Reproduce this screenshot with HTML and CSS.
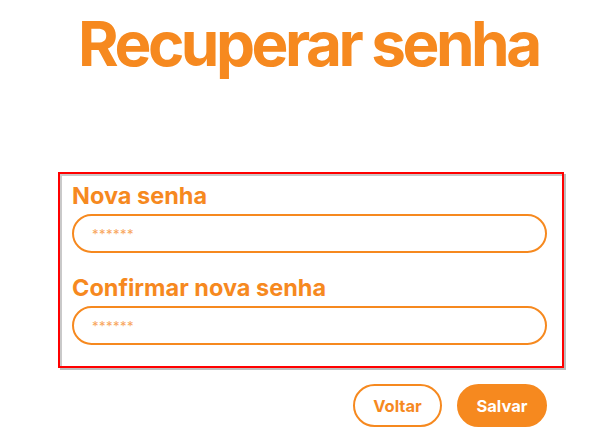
FILE: index.html
```html
<!DOCTYPE html>
<html lang="pt-BR">
<head>
<meta charset="utf-8">
<title>Recuperar senha</title>
<link rel="stylesheet" href="styles.css">
</head>
<body>
<main class="page">
  <h1 class="title">Recuperar senha</h1>
  <form class="form">
    <div class="panel">
      <label class="label" for="nova">Nova senha</label>
      <input class="field" id="nova" type="password" placeholder="******">
      <label class="label label-second" for="confirma">Confirmar nova senha</label>
      <input class="field" id="confirma" type="password" placeholder="******">
    </div>
    <div class="actions">
      <button type="button" class="btn btn-outline">Voltar</button>
      <button type="submit" class="btn btn-solid">Salvar</button>
    </div>
  </form>
</main>
</body>
</html>
```
FILE: styles.css
```css
* { box-sizing: border-box; }
html, body { margin: 0; padding: 0; background: #ffffff; }
body { font-family: Inter, "Liberation Sans", Arial, sans-serif; color: #f6891f; }
.page { width: 596px; height: 444px; position: relative; }
.title {
  margin: 13px 0 0 0;
  padding-left: 78px;
  font-size: 62px;
  line-height: 62px;
  font-weight: 700;
  letter-spacing: -3.5px;
  color: #f6891f;
  white-space: nowrap;
}
.form { margin: 97px 0 0 58px; width: 508px; }
.panel {
  width: 506px;
  border: 2px solid #ff0000;
  box-shadow: 2px 2px 0 0 #bdbdbd, inset 2px 2px 0 0 #c9c9c9;
  padding: 8px 15px 21px 12px;
  display: flex;
  flex-direction: column;
}
.label {
  font-size: 23.5px;
  line-height: 28px;
  font-weight: 700;
  color: #f6891f;
  display: block;
}
.label-second { margin-top: 21px; }
.field {
  margin-top: 4px;
  height: 39px;
  width: 100%;
  border: 2px solid #f6891f;
  border-radius: 20px;
  padding: 0 18px;
  font-family: Inter, "Liberation Sans", Arial, sans-serif;
  font-size: 13px;
  color: #f6891f;
  outline: none;
  background: #fff;
}
.field::placeholder { color: #f8a55c; letter-spacing: 0.5px; }
.actions {
  display: flex;
  justify-content: flex-end;
  gap: 15px;
  margin-top: 16px;
  width: 489px;
}
.btn {
  height: 43px;
  border-radius: 22px;
  border: 2px solid #f6891f;
  font-family: Inter, "Liberation Sans", Arial, sans-serif;
  font-size: 16.5px;
  font-weight: 700;
  padding: 0;
  cursor: pointer;
}
.btn-outline { width: 89px; background: #ffffff; color: #f6891f; }
.btn-solid { width: 90px; background: #f6891f; color: #ffffff; }
```
